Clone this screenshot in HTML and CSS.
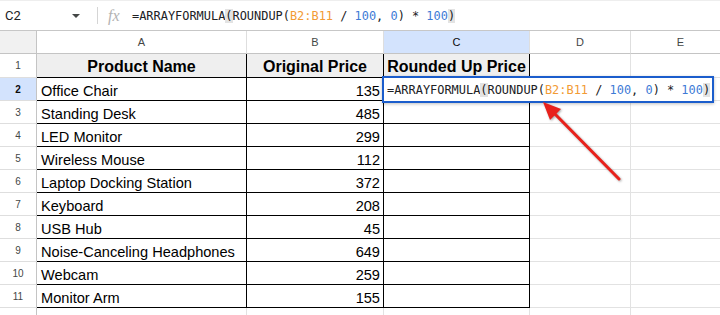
FILE: index.html
```html
<!DOCTYPE html>
<html>
<head>
<meta charset="utf-8">
<link rel="stylesheet" href="styles.css">
</head>
<body>
<div class="formula-bar">
  <div class="namebox"><span class="ref">C2</span><span class="caret"></span></div>
  <div class="divider"></div>
  <span class="fx">fx</span>
  <div class="formula mono">=ARRAYFORMULA<span class="hl">(</span>ROUNDUP(<span class="rng">B2:B11</span> / <span class="num">100</span>, <span class="num">0</span>) * <span class="num">100</span><span class="hl">)</span></div>
</div>
<div class="sheet">
  <div class="grid">
    <div class="corner"></div>
    <div class="ch">A</div><div class="ch">B</div><div class="ch sel">C</div><div class="ch">D</div><div class="ch">E</div>

    <div class="rh">1</div>
    <div class="c t head">Product Name</div><div class="c t head">Original Price</div><div class="c t head">Rounded Up Price</div><div class="c"></div><div class="c"></div>

    <div class="rh sel">2</div>
    <div class="c t">Office Chair</div><div class="c t n">135</div><div class="c t"></div><div class="c"></div><div class="c"></div>
    <div class="rh">3</div>
    <div class="c t">Standing Desk</div><div class="c t n">485</div><div class="c t"></div><div class="c"></div><div class="c"></div>
    <div class="rh">4</div>
    <div class="c t">LED Monitor</div><div class="c t n">299</div><div class="c t"></div><div class="c"></div><div class="c"></div>
    <div class="rh">5</div>
    <div class="c t">Wireless Mouse</div><div class="c t n">112</div><div class="c t"></div><div class="c"></div><div class="c"></div>
    <div class="rh">6</div>
    <div class="c t">Laptop Docking Station</div><div class="c t n">372</div><div class="c t"></div><div class="c"></div><div class="c"></div>
    <div class="rh">7</div>
    <div class="c t">Keyboard</div><div class="c t n">208</div><div class="c t"></div><div class="c"></div><div class="c"></div>
    <div class="rh">8</div>
    <div class="c t">USB Hub</div><div class="c t n">45</div><div class="c t"></div><div class="c"></div><div class="c"></div>
    <div class="rh">9</div>
    <div class="c t">Noise-Canceling Headphones</div><div class="c t n">649</div><div class="c t"></div><div class="c"></div><div class="c"></div>
    <div class="rh">10</div>
    <div class="c t">Webcam</div><div class="c t n">259</div><div class="c t"></div><div class="c"></div><div class="c"></div>
    <div class="rh">11</div>
    <div class="c t">Monitor Arm</div><div class="c t n">155</div><div class="c t"></div><div class="c"></div><div class="c"></div>
    <div class="rh">12</div>
    <div class="c"></div><div class="c"></div><div class="c"></div><div class="c"></div><div class="c"></div>
  </div>
  <div class="editor mono">=ARRAYFORMULA<span class="hl">(</span>ROUNDUP(<span class="rng">B2:B11</span> / <span class="num">100</span>, <span class="num">0</span>) * <span class="num">100</span><span class="hl">)</span></div>
  <svg class="arrow" width="720" height="284" viewBox="0 31 720 284">
    <line x1="619" y1="179" x2="552" y2="111" stroke="#e8211b" stroke-width="3" stroke-linecap="round"/>
    <polygon points="543,102 561,109 550,120" fill="#e8211b"/>
  </svg>
</div>
</body>
</html>
```
FILE: styles.css
```css
html, body {
  margin: 0;
  padding: 0;
  background: #fff;
}
body {
  width: 720px;
  height: 315px;
  overflow: hidden;
  font-family: "Liberation Sans", Arial, sans-serif;
  color: #000;
}
.mono {
  font-family: "DejaVu Sans Mono", "Liberation Mono", monospace;
  font-size: 11.93px;
  color: #202124;
  white-space: pre;
}
.hl { background: #e3e3e3; }
.rng { color: #f29b34; }
.num { color: #3d7ad6; }

.formula-bar {
  height: 31px;
  box-sizing: border-box;
  border-top: 1px solid #eeeeee;
  border-bottom: 1px solid #c7c7c7;
  display: flex;
  align-items: center;
}
.namebox {
  width: 92px;
  box-sizing: border-box;
  padding-left: 5px;
  padding-right: 12px;
  display: flex;
  align-items: center;
  justify-content: space-between;
}
.ref {
  font-family: Roboto, "Liberation Sans", sans-serif;
  font-size: 13px;
  color: #202124;
}
.caret {
  width: 0;
  height: 0;
  border-left: 4px solid transparent;
  border-right: 4px solid transparent;
  border-top: 4px solid #444746;
}
.divider {
  width: 1px;
  height: 17px;
  background: #d5d5d5;
  margin-left: 5px;
}
.fx {
  margin-left: 10px;
  width: 14px;
  font-family: "Liberation Serif", serif;
  font-style: italic;
  font-size: 16px;
  color: #b3b3b3;
  line-height: 1;
}
.formula {
  margin-left: 10px;
}

.sheet {
  position: relative;
}
.grid {
  display: grid;
  grid-template-columns: 37px 210px 137px 146px 101px 100px;
  grid-template-rows: 23px 24px repeat(11, 23px);
}
.grid > div {
  box-sizing: border-box;
  overflow: hidden;
  white-space: nowrap;
}
.corner {
  background: #f1f1f1;
  border-right: 1px solid #c4c4c4;
  border-bottom: 1px solid #c4c4c4;
}
.ch {
  border-right: 1px solid #dedede;
  border-bottom: 1px solid #c4c4c4;
  font-size: 11px;
  color: #444746;
  display: flex;
  align-items: center;
  justify-content: center;
}
.ch.sel {
  background: #d3e3fd;
  color: #0b0b0b;
}
.rh {
  border-right: 1px solid #c4c4c4;
  border-bottom: 1px solid #dedede;
  font-size: 10px;
  color: #444746;
  display: flex;
  align-items: center;
  justify-content: center;
}
.rh.sel {
  background: #d3e3fd;
  color: #0b0b0b;
  font-weight: bold;
}
.c {
  border-right: 1px solid #e2e2e2;
  border-bottom: 1px solid #e2e2e2;
  font-size: 14.6px;
  display: flex;
  align-items: flex-end;
  padding: 0 3px 1px 4px;
}
.c.t {
  border-right-color: #000;
  border-bottom-color: #000;
}
.c.n {
  justify-content: flex-end;
}
.c.head {
  background: #efefef;
  font-weight: bold;
  font-size: 16px;
  justify-content: center;
  padding: 0 2px 1px 2px;
}

.editor {
  position: absolute;
  left: 382px;
  top: 45px;
  width: 332px;
  height: 27px;
  box-sizing: border-box;
  border: 2px solid #1b5dcc;
  background: #fff;
  padding-left: 3px;
  display: flex;
  align-items: center;
  box-shadow: 0 1px 3px rgba(0,0,0,0.25);
}
.arrow {
  position: absolute;
  left: 0;
  top: 0;
  pointer-events: none;
  filter: drop-shadow(1px 1px 1px rgba(0,0,0,0.35));
}
```
